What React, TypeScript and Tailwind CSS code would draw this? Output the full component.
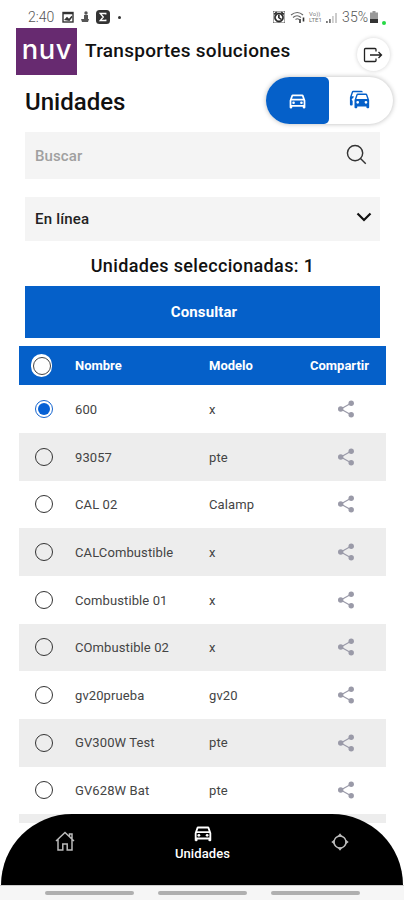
import { useState } from 'react';
import { MdAlarm, MdOutlineDirectionsCar } from 'react-icons/md';

interface Unit {
  name: string;
  model: string;
}

const units: Unit[] = [
  { name: '600', model: 'x' },
  { name: '93057', model: 'pte' },
  { name: 'CAL 02', model: 'Calamp' },
  { name: 'CALCombustible', model: 'x' },
  { name: 'Combustible 01', model: 'x' },
  { name: 'COmbustible 02', model: 'x' },
  { name: 'gv20prueba', model: 'gv20' },
  { name: 'GV300W Test', model: 'pte' },
  { name: 'GV628W Bat', model: 'pte' },
];

function CarsIcon() {
  return (
    <svg viewBox="0 0 24 24" className="mb-[1px] h-[22px] w-[22px]" fill="currentColor">
      <path d="M8,11L9.5,6.5H18.5L20,11M18.5,16A1.5,1.5 0 0,1 17,14.5A1.5,1.5 0 0,1 18.5,13A1.5,1.5 0 0,1 20,14.5A1.5,1.5 0 0,1 18.5,16M9.5,16A1.5,1.5 0 0,1 8,14.5A1.5,1.5 0 0,1 9.5,13A1.5,1.5 0 0,1 11,14.5A1.5,1.5 0 0,1 9.5,16M19.92,6C19.71,5.4 19.14,5 18.5,5H9.5C8.86,5 8.29,5.4 8.08,6L6,12V20A1,1 0 0,0 7,21H8A1,1 0 0,0 9,20V19H19V20A1,1 0 0,0 20,21H21A1,1 0 0,0 22,20V12L19.92,6M14.92,3C14.71,2.4 14.14,2 13.5,2H4.5C3.86,2 3.29,2.4 3.08,3L1,9V17A1,1 0 0,0 2,18H3A1,1 0 0,0 4,17V12.91C3.22,12.63 2.82,11.77 3.1,11C3.32,10.4 3.87,10 4.5,10H4.57L5.27,8H3L4.5,3.5H15.09L14.92,3Z" />
    </svg>
  );
}

function ShareIcon() {
  return (
    <svg viewBox="0 0 18 18" className="h-[18px] w-[18px] text-[#9a9aa8]" fill="currentColor">
      <path d="M14 3.2 3.8 9 14 14.8" fill="none" stroke="currentColor" strokeWidth="1.2" />
      <circle cx="14.2" cy="3.2" r="2.7" />
      <circle cx="3.7" cy="9" r="2.7" />
      <circle cx="14.2" cy="14.8" r="2.7" />
    </svg>
  );
}

function StatusBar() {
  return (
    <div className="flex h-[28px] shrink-0 items-center pt-[6px] pl-[28px] pr-[19px] text-[#555]">
      <span className="w-[34px] text-[14px] font-light leading-none">2:40</span>
      <svg viewBox="0 0 12 12" className="h-[12px] w-[12px]">
        <rect x="1" y="1.5" width="10" height="9.5" fill="none" stroke="#333" strokeWidth="1.4" />
        <path d="M1 1h10v2.200H1zM2 9l3-3.200 2 2 2.500-3 1 1.200-3 4z" fill="#333" />
      </svg>
      <svg viewBox="0 0 10 12" className="ml-[6px] h-[12px] w-[10px]" fill="#555">
        <circle cx="6" cy="2" r="1.7" />
        <path d="M4 4h4v4h1l-1 3H2L1 8h3z" />
      </svg>
      <svg viewBox="0 0 14 14" className="ml-[6px] h-[14px] w-[14px]">
        <rect width="14" height="14" rx="3.5" fill="#333" />
        <path d="M9.8 4.6V3.5H4.2L7.3 7l-3.1 3.5h5.6V9.400" fill="none" stroke="#fff" strokeWidth="1.3" />
      </svg>
      <span className="ml-[8px] h-[3px] w-[3px] rounded-full bg-[#333]" />
      <MdAlarm className="ml-auto h-[12px] w-[12px] text-[#222]" strokeWidth={1.5} stroke="currentColor" />
      <svg viewBox="0 0 16 12" className="ml-[5px] h-[12px] w-[16px]" fill="none" stroke="#666" strokeWidth="1.2">
        <path d="M1 4q6.500-5 12 0M3 6.500q4-3.500 8 0M5.500 8.500q2-1.500 3.500 0" />
        <path d="M10 8v4M13.500 6.500v4" stroke="#333" strokeWidth="1.6" />
      </svg>
      <span className="ml-[3px] flex w-[16px] flex-col text-[6px] leading-[6px] text-[#777]">
        <span>Vo))</span>
        <span>LTE1</span>
      </span>
      <svg viewBox="0 0 13 11" className="h-[11px] w-[13px]">
        <path d="M1 9h1.800v2H1zM4 7h1.800v4H4z" fill="#777" />
        <path d="M7 4h1.800v7H7zM10 1h2v10h-2z" fill="#ccc" />
      </svg>
      <span className="ml-[4px] text-[14px] font-light leading-none">35%</span>
      <svg viewBox="0 0 8 12" className="ml-[2px] h-[12px] w-[8px]">
        <path d="M2.500 0h3v1.500H8V12H0V1.500h2.500z" fill="#999" />
        <path d="M0 8h8v4H0z" fill="#333" />
      </svg>
      <span className="-mr-[1px] ml-[4px] mt-[11px] h-[4px] w-[4px] shrink-0 rounded-full bg-[#25d944]" />
    </div>
  );
}

function Header() {
  return (
    <header className="flex h-[47px] shrink-0 items-start pl-[16px] pr-[14px]">
      <div className="flex h-[47px] w-[61px] items-center justify-center bg-[#672a70] pb-[4px]">
        <span className="scale-x-105 font-[Inter] text-[26px] font-medium leading-none tracking-[0.5px] text-white">nuv</span>
      </div>
      <h1 className="ml-[8px] mt-[10px] text-[19px] font-medium leading-[26px] tracking-[0.27px]">
        Transportes soluciones
      </h1>
      <button className="ml-auto mt-[10px] flex h-[33px] w-[33px] items-center justify-center rounded-full bg-white pr-[2px] shadow-[0_0_4px_rgba(0,0,0,0.18)]">
        <svg viewBox="0 0 20 16" className="h-[16px] w-[20px]" fill="none" stroke="#222" strokeWidth="1.3">
          <path d="M13 4.500V2.500Q13 1.500 12 1.500H2.500Q1.500 1.500 1.500 2.500v11Q1.500 14.500 2.500 14.500H12q1 0 1-1v-2" />
          <path d="M7 8h11.500M15.500 5l3 3-3 3" />
        </svg>
      </button>
    </header>
  );
}

export default function App() {
  const [selected, setSelected] = useState('600');

  return (
    <div className="relative flex h-[900px] w-[404px] flex-col overflow-hidden bg-white font-[Roboto,sans-serif] text-[#111]">
      <StatusBar />
      <Header />

      {/* Title and view switch */}
      <div className="flex h-[57px] shrink-0 items-start pl-[25px] pr-[11px]">
        <h2 className="mt-[11px] text-[24px] font-medium leading-[32px]">Unidades</h2>
        <div className="ml-auto mt-[2px] flex h-[47px] w-[127px] overflow-hidden rounded-full bg-white shadow-[0_0_5px_rgba(0,0,0,0.28)]">
          <button className="flex w-[63px] items-center justify-center rounded-r-[5px] bg-[#0560c9] pr-[1px] text-white">
            <MdOutlineDirectionsCar className="h-[21px] w-[21px]" />
          </button>
          <button className="flex flex-1 items-center justify-center pr-[3px] text-[#0560c9]">
            <CarsIcon />
          </button>
        </div>
      </div>

      {/* Filters */}
      <div className="flex shrink-0 flex-col pl-[25px] pr-[24px]">
        <div className="flex h-[47px] items-center justify-between bg-[#f4f4f4] pl-[10px] pr-[13px]">
          <span className="pt-[1px] text-[15px] font-medium tracking-[0.1px] text-[#a0a0a0]">Buscar</span>
          <svg viewBox="0 0 22 22" className="mb-[2px] h-[21px] w-[21px]" fill="none" stroke="#333" strokeWidth="1.5">
            <circle cx="9.500" cy="9.500" r="8" />
            <path d="m15.200 15.200 5.500 5.500" />
          </svg>
        </div>
        <div className="mt-[18px] flex h-[44px] items-center justify-between bg-[#f4f4f4] pl-[10px] pr-[8px]">
          <span className="text-[15px] font-medium tracking-[0.2px] text-[#222]">En línea</span>
          <svg viewBox="0 0 16 10" className="mb-[5px] h-[10px] w-[16px]" fill="none" stroke="#111" strokeWidth="2.2">
            <path d="m1.500 1.500 6.500 6.500 6.500-6.500" />
          </svg>
        </div>
        <p className="h-[45px] pt-[11px] text-center text-[18px] font-medium leading-[28px] tracking-[0.35px]">
          Unidades seleccionadas: 1
        </p>
        <button className="h-[52px] bg-[#0560c9] pl-[3px] pt-[1px] text-[15px] font-bold tracking-[0.1px] text-white">
          Consultar
        </button>
      </div>

      {/* Units table */}
      <div className="ml-[19px] mr-[18px] mt-[8px] flex shrink-0 flex-col">
        <div className="flex h-[39.4px] items-center bg-[#0560c9] text-[13px] font-bold text-white">
          <span className="ml-[12px] flex h-[23px] w-[21px] items-center justify-center rounded-full bg-white">
            <span className="h-[18px] w-[18px] rounded-full border border-[#444]" />
          </span>
          <span className="ml-[23px] w-[134px]">Nombre</span>
          <span className="w-[101px]">Modelo</span>
          <span>Compartir</span>
        </div>
        {units.map((unit) => (
          <div
            key={unit.name}
            onClick={() => setSelected(unit.name)}
            className="flex h-[47.65px] items-center text-[13px] tracking-[0.1px] text-[#444] even:bg-white odd:bg-[#ededed]"
          >
            <span
              className={`ml-[16px] flex h-[18px] w-[18px] items-center justify-center rounded-full border-[1.5px] ${
                selected === unit.name ? 'border-[#1565cf]' : 'border-[#333]'
              }`}
            >
              {selected === unit.name && <span className="h-[12px] w-[12px] rounded-full bg-[#0560d4]" />}
            </span>
            <span className="ml-[22px] w-[134px] pt-[1px]">{unit.name}</span>
            <span className="w-[128px] pt-[1px]">{unit.model}</span>
            <ShareIcon />
          </div>
        ))}
        <div className="h-[9px] bg-[#ededed]" />
      </div>

      {/* Bottom navigation over the end of the list */}
      <nav className="absolute inset-x-0 bottom-0">
        <div className="mx-[1px] flex h-[71px] rounded-t-[76px] bg-black text-white">
          <div className="flex w-[128px] justify-center pt-[17px]">
            <svg viewBox="0 0 20 20" className="h-[20px] w-[20px] text-[#bbb]" fill="none" stroke="currentColor" strokeWidth="1.5">
              <path d="m1 10 9-8.500L19 10M14.500 5.500V3H17v5M3 8.500V19h4.800v-6h4.400v6H17V8.500" />
            </svg>
          </div>
          <div className="flex flex-1 flex-col items-center pl-[1px] pt-[8px]">
            <MdOutlineDirectionsCar className="h-[22px] w-[22px]" />
            <span className="mt-[1px] text-[13px] font-medium leading-[18px] tracking-[0.1px]">Unidades</span>
          </div>
          <div className="flex w-[128px] justify-center pl-[1px] pt-[19px]">
            <svg viewBox="0 0 18 18" className="h-[18px] w-[18px]" fill="#bbb">
              <circle cx="9" cy="9" r="6" fill="none" stroke="#bbb" strokeWidth="1.5" />
              <path d="M9 .3 11.500 3.500h-5zM9 17.700l2.500-3.200h-5zM.3 9l3.200-2.500v5zM17.700 9l-3.200-2.500v5z" />
            </svg>
          </div>
        </div>
        <div className="flex h-[15px] items-center justify-center gap-[24px] border-t border-[#ccc] bg-[#f6f6f6]">
          <span className="h-[4px] w-[89px] rounded-full bg-[#b0b0b0]" />
          <span className="h-[4px] w-[89px] rounded-full bg-[#b0b0b0]" />
          <span className="h-[4px] w-[89px] rounded-full bg-[#b0b0b0]" />
        </div>
      </nav>
    </div>
  );
}
